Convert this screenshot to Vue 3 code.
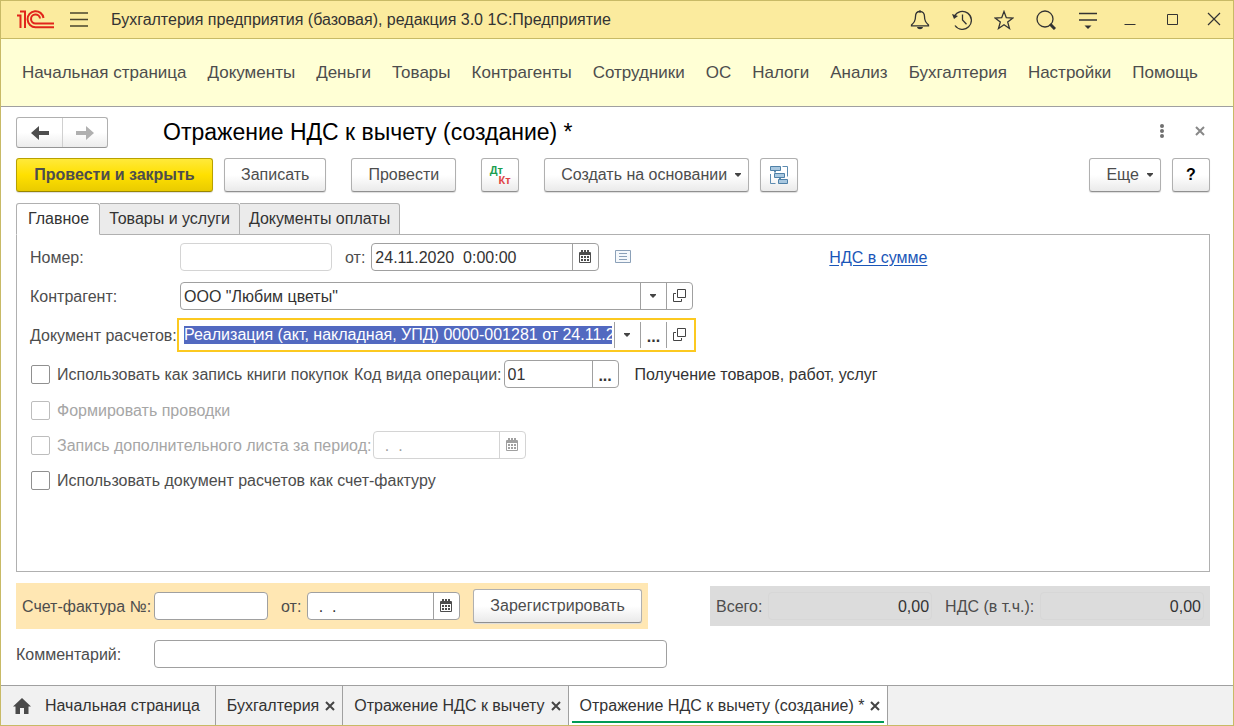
<script setup>
import { ref } from 'vue'

const sections = ['Начальная страница', 'Документы', 'Деньги', 'Товары', 'Контрагенты', 'Сотрудники', 'ОС', 'Налоги', 'Анализ', 'Бухгалтерия', 'Настройки', 'Помощь']
const pages = ['Главное', 'Товары и услуги', 'Документы оплаты']
const activePage = ref(0)
const windows = [
  { title: 'Бухгалтерия', active: false },
  { title: 'Отражение НДС к вычету', active: false },
  { title: 'Отражение НДС к вычету (создание) *', active: true }
]
const number = ref('')
const date = ref('24.11.2020  0:00:00')
const partner = ref('ООО "Любим цветы"')
const settlement = ref('Реализация (акт, накладная, УПД) 0000-001281 от 24.11.2020')
const opCode = ref('01')
const sheetPeriod = ref(' .  .')
const invoiceNumber = ref('')
const invoiceDate = ref(' .  .')
const total = ref('0,00')
const vat = ref('0,00')
const comment = ref('')
</script>

<template>
  <div class="window">
    <svg class="defs" width="0" height="0" aria-hidden="true">
      <symbol id="calendar" viewBox="0 0 13 14">
        <path d="M0 3a1 1 0 0 1 1-1h1v1h2V2h1v1h2V2h1v1h2V2h1a1 1 0 0 1 1 1v9a1 1 0 0 1-1 1H1a1 1 0 0 1-1-1zM1 5v7h10V5z" fill="currentColor" fill-rule="evenodd" />
        <path d="M2 0h2v3H2zM5 0h2v3H5zM8 0h2v3H8z" fill="currentColor" />
        <path d="M2 6h2v2H2zM5 6h2v2H5zM8 6h2v2H8zM2 9h2v2H2zM5 9h2v2H5zM8 9h2v2H8z" fill="currentColor" />
      </symbol>
      <symbol id="open" viewBox="0 0 13 14">
        <path d="M4.500 .5h8v8h-8zM3 4.500H.5v8h8V10" fill="none" stroke="#444" />
      </symbol>
      <symbol id="cross" viewBox="0 0 10 10">
        <path d="M1 1l8 8M9 1L1 9" fill="none" stroke="currentColor" stroke-width="2" />
      </symbol>
      <symbol id="caret" viewBox="0 0 7 4">
        <path d="M0 0h6v1L3 4 0 1z" fill="#444" />
      </symbol>
    </svg>

    <header class="titlebar">
      <svg class="logo" width="37" height="19" viewBox="0 0 37 19" fill="none" stroke="#e1251b" stroke-width="2">
        <path d="M0 5.500h3.500V18M3 1.500h5V18" />
        <path d="M26.500 8A8 8 0 1 0 18.500 17.200H37" />
        <path d="M23 8.500A4.500 4.500 0 1 0 18.500 13.500H37" />
      </svg>
      <button class="plain" aria-label="Главное меню">
        <svg width="18" height="15" viewBox="0 0 18 15" stroke="#4a452e"><path d="M0 1h18M0 7.500h18M0 14h18" stroke-width="1.300" /></svg>
      </button>
      <h1 class="app-name">Бухгалтерия предприятия (базовая), редакция 3.0 1С:Предприятие</h1>
      <div class="system">
        <button class="plain" aria-label="Уведомления">
          <svg width="20" height="20" viewBox="0 0 20 20" fill="none" stroke="#333" stroke-width="1.300">
            <path d="M10 1.500c-3 0-4.500 2-4.500 5 0 4.500-1.500 6-4 8.500v.8h17V15c-2.500-2.500-4-4-4-8.500 0-3-1.500-5-4.500-5z" />
            <path d="M9 1.500h2" stroke-width="2" /><path d="M7 17h6c-.5 3-5.500 3-6 0z" fill="#333" stroke="none" />
          </svg>
        </button>
        <button class="plain" aria-label="История">
          <svg width="20" height="20" viewBox="0 0 20 20" fill="none" stroke="#333" stroke-width="1.300">
            <path d="M2.400 6.200A9 9 0 1 1 3 15.500M10.500 4.500V10l4 4.200" /><path d="M0 4l6 2-4 3z" fill="#333" stroke="none" />
          </svg>
        </button>
        <button class="plain" aria-label="Избранное">
          <svg width="20" height="20" viewBox="0 0 20 20" fill="none" stroke="#333" stroke-width="1.300">
            <path d="M10 1.500l2.300 6.200 6.600.3-5.200 4.100 1.800 6.400-5.500-3.700-5.500 3.700 1.800-6.400L1.100 8l6.600-.3z" />
          </svg>
        </button>
        <button class="plain" aria-label="Поиск">
          <svg width="20" height="20" viewBox="0 0 20 20" fill="none" stroke="#333" stroke-width="1.300">
            <circle cx="9" cy="9" r="8" /><path d="M14 14l5 5" stroke-width="3" />
          </svg>
        </button>
        <button class="plain" aria-label="Сервис">
          <svg width="20" height="20" viewBox="0 0 20 20" fill="none" stroke="#333" stroke-width="1.300">
            <path d="M1 3.500h18M1 10h18" /><path d="M6.500 15.500h7l-3.500 3.500z" fill="#333" stroke="none" />
          </svg>
        </button>
        <button class="plain" aria-label="Свернуть">
          <svg width="20" height="20" viewBox="0 0 20 20" stroke="#333"><path d="M4.500 14.500h11" /></svg>
        </button>
        <button class="plain" aria-label="Развернуть">
          <svg width="20" height="20" viewBox="0 0 20 20" fill="none" stroke="#333"><path d="M5.500 4.500h10v10h-10z" /></svg>
        </button>
        <button class="plain" aria-label="Закрыть">
          <svg width="20" height="20" viewBox="0 0 20 20" stroke="#333"><path d="M4 3l12 12M16 3L4 15" stroke-width="1.200" /></svg>
        </button>
      </div>
    </header>

    <nav class="sections">
      <a v-for="s in sections" :key="s" href="#">{{ s }}</a>
    </nav>

    <main class="document">
      <div class="heading">
        <div class="history">
          <button aria-label="Назад"><svg width="18" height="14" viewBox="0 0 18 14" fill="#4d4d4d"><path d="M0 7l8-7v5h10v4H8v5z" /></svg></button>
          <button aria-label="Вперед" disabled><svg width="18" height="14" viewBox="0 0 18 14" fill="#b0b0b0"><path d="M18 7l-8-7v5H0v4h10v5z" /></svg></button>
        </div>
        <h2>Отражение НДС к вычету (создание) *</h2>
        <div class="heading-tools">
          <button class="plain" aria-label="Действия"><svg width="6" height="14" viewBox="0 0 6 14" fill="#707070"><circle cx="3" cy="2" r="2" /><circle cx="3" cy="7" r="2" /><circle cx="3" cy="12" r="2" /></svg></button>
          <button class="plain gray" aria-label="Закрыть документ"><svg width="10" height="10"><use href="#cross" /></svg></button>
        </div>
      </div>

      <div class="toolbar">
        <button class="btn primary">Провести и закрыть</button>
        <button class="btn save">Записать</button>
        <button class="btn">Провести</button>
        <button class="btn icon dtkt" aria-label="Проводки"><span class="dt">Дт</span><span class="kt">Кт</span></button>
        <button class="btn drop">Создать на основании <svg width="7" height="4"><use href="#caret" /></svg></button>
        <button class="btn icon" aria-label="Структура подчиненности">
          <svg width="20" height="20" viewBox="0 0 20 20" fill="none" stroke="#5d8bb0">
            <path d="M13.500 1.500h5v10M1.500 9v9.500h5" />
            <path d="M6 5v2.500M11 11v3" stroke-width="2" />
            <g fill="#a9c8e0" stroke="#4f81a8"><path d="M1.500 1.500h10v4h-10zM5.500 8.500h10v4h-10zM9.500 14.500h9v4h-9z" /></g>
          </svg>
        </button>
        <button class="btn drop more">Еще <svg width="7" height="4"><use href="#caret" /></svg></button>
        <button class="btn icon help">?</button>
      </div>

      <div class="tabs" role="tablist">
        <button v-for="(p, i) in pages" :key="p" role="tab" :aria-selected="i === activePage" :class="{ active: i === activePage }" @click="activePage = i">{{ p }}</button>
      </div>

      <section class="panel">
        <div class="row">
          <label class="caption" for="number">Номер:</label>
          <div class="field w-number pale"><input id="number" v-model="number"></div>
          <label class="from" for="date">от:</label>
          <div class="field w-date"><input id="date" v-model="date"><button aria-label="Календарь"><svg width="13" height="14"><use href="#calendar" /></svg></button></div>
          <button class="plain journal" aria-label="Состояние">
            <svg width="16" height="14" viewBox="0 0 16 14" fill="#f5f8fb" stroke="#8ba0b8"><path d="M.5 .5h15v12H.5zM4 3.500h8M4 6.500h8M4 9.500h8" /></svg>
          </button>
          <a class="vat-link" href="#">НДС в сумме</a>
        </div>
        <div class="row">
          <label class="caption" for="partner">Контрагент:</label>
          <div class="field wide"><input id="partner" v-model="partner"><button aria-label="Выбрать контрагента"><svg width="7" height="4"><use href="#caret" /></svg></button><button aria-label="Открыть контрагента"><svg width="13" height="14"><use href="#open" /></svg></button></div>
        </div>
        <div class="row">
          <label class="caption" for="settlement">Документ расчетов:</label>
          <div class="field wide current"><input id="settlement" v-model="settlement"><button aria-label="Выбрать документ"><svg width="7" height="4"><use href="#caret" /></svg></button><button class="dots" aria-label="Список документов">...</button><button aria-label="Открыть документ"><svg width="13" height="14"><use href="#open" /></svg></button></div>
        </div>
        <div class="row operation">
          <label class="check"><input type="checkbox"><span>Использовать как запись книги покупок</span></label>
          <label class="code" for="code">Код вида операции:</label>
          <div class="field w-code"><input id="code" v-model="opCode"><button class="dots" aria-label="Выбрать код">...</button></div>
          <span class="code-name">Получение товаров, работ, услуг</span>
        </div>
        <div class="row low">
          <label class="check off"><input type="checkbox" disabled><span>Формировать проводки</span></label>
        </div>
        <div class="row low">
          <label class="check off"><input type="checkbox" disabled><span>Запись дополнительного листа за период:</span></label>
          <div class="field w-period pale"><input v-model="sheetPeriod" class="blank-date" aria-label="Период" disabled><button aria-label="Календарь периода" disabled><svg width="13" height="14"><use href="#calendar" /></svg></button></div>
        </div>
        <div class="row low">
          <label class="check"><input type="checkbox"><span>Использовать документ расчетов как счет-фактуру</span></label>
        </div>
      </section>

      <div class="summary">
        <div class="invoice">
          <label class="invoice-caption" for="invoice">Счет-фактура №:</label>
          <div class="field w-invoice"><input id="invoice" v-model="invoiceNumber"></div>
          <label class="from" for="invoice-date">от:</label>
          <div class="field w-period"><input id="invoice-date" v-model="invoiceDate" class="blank-date"><button aria-label="Календарь счета-фактуры"><svg width="13" height="14"><use href="#calendar" /></svg></button></div>
          <button class="btn register">Зарегистрировать</button>
        </div>
        <div class="totals">
          <label for="total">Всего:</label>
          <input id="total" v-model="total" readonly>
          <label class="vat-caption" for="vat">НДС (в т.ч.):</label>
          <input id="vat" v-model="vat" readonly>
        </div>
      </div>

      <div class="comment">
        <label for="comment">Комментарий:</label>
        <div class="field wide"><input id="comment" v-model="comment"></div>
      </div>
    </main>

    <footer class="taskbar">
      <button class="task home">
        <svg width="18" height="16" viewBox="0 0 18 16" fill="#4a4a4a"><path d="M9 0l9 8.500h-2.500V16H11v-6H7v6H2.500V8.500H0z" /></svg>
        Начальная страница
      </button>
      <div v-for="w in windows" :key="w.title" class="task" :class="{ active: w.active }">
        <button class="plain">{{ w.title }}</button>
        <button class="plain close" :aria-label="'Закрыть: ' + w.title"><svg width="10" height="10"><use href="#cross" /></svg></button>
      </div>
    </footer>
  </div>
</template>

<style>
body {
  margin: 0;
}
</style>

<style scoped>
.window,
.window * {
  box-sizing: border-box;
}
.window {
  display: flex;
  flex-direction: column;
  min-height: 100vh;
  border: 1px solid #c8ba66;
  background: #fff;
  color: #4d4d4d;
  font: 16px/20px "Liberation Sans", Arial, sans-serif;
}
.defs {
  position: absolute;
}
svg {
  display: block;
  flex: none;
}
button,
input {
  margin: 0;
  padding: 0;
  border: 0;
  background: none;
  color: inherit;
  font: inherit;
}
button {
  display: flex;
  align-items: center;
  justify-content: center;
  white-space: nowrap;
}
label,
.code-name,
.vat-link,
.check span {
  padding-top: 2px;
  white-space: nowrap;
}
h1,
h2 {
  margin: 0;
  font-weight: 400;
}

.titlebar {
  display: flex;
  align-items: center;
  height: 38px;
  padding: 0 9px 0 16px;
  border-bottom: 1px solid #c8ba66;
  background: #fbeb9e;
}
.logo {
  margin-right: 16px;
}
.app-name {
  margin-left: 23px;
  color: #333;
  font-size: 16px;
}
.system {
  display: flex;
  gap: 22px;
  margin-left: auto;
}

.sections {
  display: flex;
  align-items: center;
  gap: 21px;
  height: 68px;
  padding: 0 21px;
  border-bottom: 1px solid #a0a0a0;
  background: #ffffd5;
  font-size: 17px;
}
.sections a {
  color: #4d4d4d;
  text-decoration: none;
  white-space: nowrap;
}

.document {
  display: flex;
  flex: 1;
  flex-direction: column;
  padding: 10px 23px 17px 15px;
}
.heading {
  display: flex;
  align-items: center;
  height: 31px;
}
.history {
  display: flex;
  height: 31px;
  border: 1px solid #b0b0b0;
  border-bottom-color: #959595;
  border-radius: 3px;
  background: linear-gradient(#fff 50%, #ececec);
}
.history button {
  width: 45px;
}
.history button + button {
  border-left: 1px solid #d0d0d0;
}
.heading h2 {
  margin-left: 55px;
  padding-bottom: 2px;
  color: #000;
  font-size: 23px;
  line-height: 28px;
}
.heading-tools {
  display: flex;
  align-items: center;
  gap: 30px;
  margin-left: auto;
  padding: 0 5px 3px 0;
}
.gray {
  color: #888;
}

.toolbar {
  display: flex;
  gap: 11px;
  margin-top: 10px;
}
.btn {
  height: 34px;
  padding: 0 16px;
  border: 1px solid #b0b0b0;
  border-bottom-color: #909090;
  border-radius: 3px;
  background: linear-gradient(#fff 50%, #eaeaea);
  box-shadow: 0 1px 1px #ddd;
}
.primary {
  min-width: 197px;
  border-color: #b8a100 #b8a100 #988500;
  background: linear-gradient(#ffe93a, #ffe000 50%, #e9cb00);
  font-weight: 700;
}
.save,
.toolbar .dtkt {
  margin-right: 14px;
}
.toolbar .icon {
  width: 38px;
  padding: 0;
}
.dtkt {
  display: grid;
  grid-template: 10px 10px / 9px 12px;
  align-content: center;
  margin-left: 14px;
  font-size: 11px;
  font-weight: 700;
  line-height: 10px;
}
.dt {
  grid-area: 1 / 1 / 2 / 3;
  justify-self: start;
  color: #1a9e50;
}
.kt {
  grid-area: 2 / 1 / 3 / 3;
  justify-self: end;
  color: #e04545;
}
.drop {
  gap: 8px;
  padding-right: 6px;
}
.more {
  margin-left: auto;
}
.help {
  color: #000;
  font-weight: 700;
}

.tabs {
  z-index: 1;
  display: flex;
  margin-top: 11px;
}
.tabs button {
  height: 32px;
  padding: 0 9px;
  border: 1px solid #b0b0b0;
  border-left: 0;
  border-radius: 0 3px 0 0;
  background: #ebebeb;
  color: #333;
}
.tabs .active {
  padding: 0 10px 0 11px;
  border-bottom-color: #fff;
  border-left: 1px solid #b0b0b0;
  border-radius: 3px 3px 0 0;
  background: #fff;
}
.panel {
  flex: 1;
  margin-top: -1px;
  padding: 8px 13px;
  border: 1px solid #b0b0b0;
}
.row {
  display: flex;
  align-items: center;
  height: 28px;
  margin-bottom: 11px;
}
.operation {
  margin-bottom: 10px;
}
.low {
  height: 24px;
}
.caption {
  width: 150px;
}
.from {
  margin: 0 6px 0 13px;
}
.field {
  display: flex;
  height: 28px;
  border: 1px solid #a0a0a0;
  border-radius: 4px;
  background: #fff;
}
.field input {
  flex: 1;
  min-width: 0;
  padding: 2px 3px 0;
  color: #333;
  white-space: pre;
}
.field button {
  flex: none;
  width: 26px;
  border-left: 1px solid #a0a0a0;
}
.field .dots {
  padding-top: 4px;
  color: #333;
  font-weight: 700;
}
.pale,
.pale button {
  border-color: #d4d4d4;
  color: #a0a0a0;
}
.field .blank-date {
  padding-left: 6px;
}
.pale .blank-date {
  color: #a0a0a0;
}
.w-number {
  width: 152px;
}
.w-date {
  width: 228px;
}
.wide {
  width: 513px;
}
.w-code {
  width: 115px;
}
.w-period {
  width: 153px;
}
.w-invoice {
  width: 114px;
}
.current {
  border-color: transparent;
  border-radius: 0;
  outline: 2px solid #fcc920;
  outline-offset: 1px;
}
.field.current input {
  height: 18px;
  margin: 4px 2px 4px 3px;
  padding: 0;
  background: #5269c0;
  color: #fff;
}
.journal {
  margin-left: 16px;
}
.vat-link {
  margin-left: 198px;
  color: #1a56b8;
  text-underline-offset: 2px;
}
.check {
  display: flex;
  align-items: center;
  gap: 7px;
  margin-left: 1px;
  padding: 0;
}
.check input {
  appearance: none;
  width: 19px;
  height: 19px;
  border: 1px solid #909090;
  border-radius: 2px;
}
.off {
  color: #a6a6a6;
}
.off input {
  border-color: #bdbdbd;
}
.code {
  margin: 0 2px 0 6px;
}
.code-name {
  margin-left: 16px;
  color: #333;
}
.off + .field {
  margin-left: 2px;
}

.summary {
  display: flex;
  align-items: center;
  justify-content: space-between;
  margin-top: 11px;
}
.invoice {
  display: flex;
  align-items: center;
  height: 46px;
  padding: 0 6px;
  background: #ffe7b3;
}
.invoice-caption {
  width: 132px;
}
.register {
  margin-left: 13px;
}
.totals {
  display: flex;
  align-items: center;
  width: 500px;
  height: 40px;
  padding: 0 6px;
  background: #dcdcdc;
}
.totals input {
  flex: 1;
  min-width: 0;
  height: 28px;
  margin-left: 6px;
  padding: 2px 2px 0;
  border: 1px solid #d7d7d7;
  border-radius: 4px;
  color: #333;
  text-align: right;
}
.vat-caption {
  margin-left: 13px;
}
.comment {
  display: flex;
  align-items: center;
  margin-top: 11px;
}
.comment label {
  width: 138px;
}

.taskbar {
  display: flex;
  height: 40px;
  border-top: 1px solid #a0a0a0;
  background: #f1f1f1;
  color: #333;
}
.task {
  display: flex;
  align-items: center;
  gap: 6px;
  padding: 0 7px 0 11px;
  border-right: 1px solid #a0a0a0;
}
.home {
  gap: 14px;
  padding: 0 15px 0 12px;
}
.task.active {
  background: linear-gradient(#009b55, #009b55) center 35px / calc(100% - 6px) 2px no-repeat #fff;
}
.close {
  color: #444;
}
</style>
